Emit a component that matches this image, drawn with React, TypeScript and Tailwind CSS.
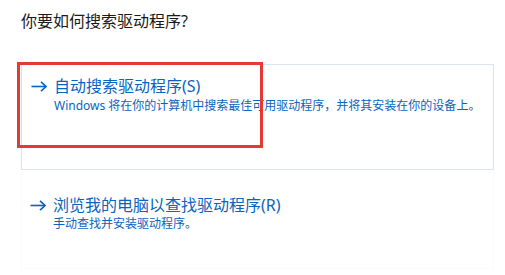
import React from "react";

const font = { fontFamily: '"Noto Sans", "Noto Sans CJK SC", sans-serif' };

function Arrow() {
  return (
    <svg width="16" height="11" viewBox="0 0 16 11" fill="none">
      <path d="M0.5 5.5H15" stroke="#0a63c0" strokeWidth="1.6" />
      <path d="M10 0.8L15 5.5L10 10.2" stroke="#0a63c0" strokeWidth="1.6" />
    </svg>
  );
}

export default function App() {
  return (
    <div className="relative w-[505px] h-[275px] bg-white overflow-hidden" style={font}>
      <div className="pl-[21px] pt-[9px] text-[16px] leading-[24px] text-[#1a1a1a]">
        你要如何搜索驱动程序?
      </div>

      <div className="ml-[21px] mt-[31px] w-[473px] h-[106px] border border-[#dce3ea] pl-[9px] pt-[11px] flex gap-[7px]">
        <div className="h-[20px] flex items-center">
          <Arrow />
        </div>
        <div className="flex flex-col">
          <div className="text-[16px] leading-[20px] text-[#0a63c0]">自动搜索驱动程序(S)</div>
          <div className="mt-[2px] text-[12px] leading-[16px] text-[#0a63c0]">
            Windows 将在你的计算机中搜索最佳可用驱动程序，并将其安装在你的设备上。
          </div>
        </div>
      </div>

      <div className="ml-[21px] mt-[2px] w-[473px] h-[97px] border border-[#fafbfb] pl-[8px] pt-[22px] flex gap-[7px]">
        <div className="h-[20px] flex items-center">
          <Arrow />
        </div>
        <div className="flex flex-col">
          <div className="text-[16px] leading-[20px] text-[#0a63c0]">浏览我的电脑以查找驱动程序(R)</div>
          <div className="mt-[1px] text-[12px] leading-[16px] text-[#0a63c0]">手动查找并安装驱动程序。</div>
        </div>
      </div>

      <div className="absolute left-[17px] top-[62px] w-[246px] h-[86px] border-[3px] border-[#e53935]" />
    </div>
  );
}
